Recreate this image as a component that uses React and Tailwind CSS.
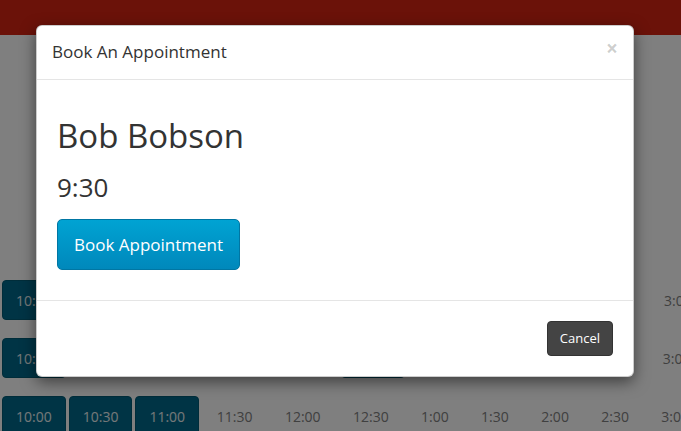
import React from 'react';

const slots = ['10:00', '10:30', '11:00', '11:30', '12:00', '12:30', '1:00', '1:30', '2:00', '2:30', '3:00'];

const rows = [
  ['10:00'],
  ['10:00', '12:30'],
  ['10:00', '10:30', '11:00'],
];

function SlotRow({ booked }) {
  return (
    <div className="flex items-stretch gap-[3px] pl-[2px] h-10 whitespace-nowrap">
      {slots.map((s) =>
        booked.includes(s) ? (
          <div
            key={s}
            className="flex items-center px-[13px] rounded-[4px] border border-[#005a75] bg-[#00688a] text-[#e8f0f2] text-[14px]"
          >
            {s}
          </div>
        ) : (
          <div key={s} className="flex items-center px-[14.7px] text-[#808080] text-[14px]">
            {s}
          </div>
        )
      )}
    </div>
  );
}

export default function App() {
  return (
    <div className="relative w-[681px] h-[431px] overflow-hidden bg-white" style={{ fontFamily: '"Open Sans", sans-serif' }}>
      <div className="h-[35px] bg-[#d72513]" />
      <div className="mt-[245px] flex flex-col gap-[18px]">
        {rows.map((r, i) => (
          <SlotRow key={i} booked={r} />
        ))}
      </div>

      <div className="absolute inset-0 bg-black/50" />

      <div className="absolute left-[36px] top-[25px] w-[598px] bg-white rounded-[6px] border border-black/20 shadow-[0_5px_15px_rgba(0,0,0,0.5)] text-[#333]">
        <div className="flex items-start justify-between px-[15px] pt-[14px] pb-[15px] border-b border-[#e5e5e5]">
          <h4 className="text-[17px] leading-[24px] text-[#333]">Book An Appointment</h4>
          <button className="text-[21px] font-bold leading-none text-black/20 -mt-[2px]">×</button>
        </div>
        <div className="px-[20px] pt-[36px] pb-[30px]">
          <h1 className="text-[33px] leading-[40px] text-[#333]">Bob Bobson</h1>
          <h2 className="mt-[16px] text-[26px] leading-[30px] text-[#333]">9:30</h2>
          <button className="mt-[17px] px-[16px] h-[51px] text-[17px] text-white rounded-[5px] border border-[#0076a3] bg-gradient-to-b from-[#00a3d3] to-[#0088bb]">
            Book Appointment
          </button>
        </div>
        <div className="flex justify-end p-[20px] border-t border-[#e5e5e5]">
          <button className="h-[35px] px-[12px] rounded-[4px] bg-[#444] border border-[#333] text-white text-[13px]">
            Cancel
          </button>
        </div>
      </div>
    </div>
  );
}
